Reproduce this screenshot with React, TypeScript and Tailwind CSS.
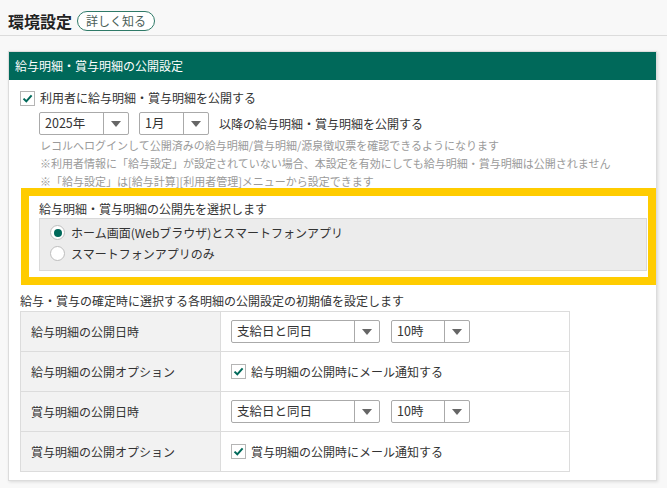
const GREEN = '#00695a';

function CheckBox() {
  return (
    <span className="flex h-[15px] w-[15px] shrink-0 items-center justify-center border border-[#b5b5b5] bg-white">
      <svg width="11" height="11" viewBox="0 0 11 11">
        <path d="M1.5 5.6 L4.3 8.3 L9.6 2.4" fill="none" stroke={GREEN} strokeWidth="2" />
      </svg>
    </span>
  );
}

function Radio({ checked }: { checked?: boolean }) {
  return (
    <span className="flex h-[15px] w-[15px] shrink-0 items-center justify-center rounded-full border border-[#bdbdbd] bg-white">
      {checked && <span className="h-[8px] w-[8px] rounded-full bg-[#00695a]" />}
    </span>
  );
}

function Select({ value, width }: { value: string; width: string }) {
  return (
    <div className={`flex h-[23px] ${width} items-stretch rounded-[2px] border border-[#aaa] bg-white`}>
      <div className="flex flex-1 items-center pl-[5px] text-[12.5px] text-[#333]">{value}</div>
      <div className="flex w-[25px] items-center justify-center border-l border-[#aaa]">
        <svg width="10" height="6" viewBox="0 0 10 6">
          <path d="M0 0 H10 L5 6 Z" fill="#666" />
        </svg>
      </div>
    </div>
  );
}

const rows = [
  { label: '給与明細の公開日時', kind: 'select' },
  { label: '給与明細の公開オプション', kind: 'check', text: '給与明細の公開時にメール通知する' },
  { label: '賞与明細の公開日時', kind: 'select' },
  { label: '賞与明細の公開オプション', kind: 'check', text: '賞与明細の公開時にメール通知する' },
];

export default function App() {
  return (
    <div className="min-h-[488px] w-[667px] bg-[#f8f8f8] font-['Noto_Sans_CJK_JP',sans-serif] text-[12px] text-[#333]">
      <div className="flex h-[36px] items-center gap-[5px] border-b border-[#dcdcdc] pl-[8px] pt-[6px]">
        <h1 className="text-[16px] font-bold leading-none text-[#222]">環境設定</h1>
        <span className="flex h-[20px] w-[78px] items-center justify-center rounded-full border-[1.5px] border-[#2f7a68] bg-white text-[12px] leading-none text-[#4a5d57]">
          詳しく知る
        </span>
      </div>

      <div className="ml-[8px] mt-[15px] w-[649px] border border-[#dcdcdc] bg-white shadow-[1px_1px_3px_rgba(0,0,0,0.12)]">
        <div className="flex h-[28px] items-center bg-[#00695a] pl-[6px] text-[12px] text-white">
          給与明細・賞与明細の公開設定
        </div>

        <div className="pb-[8px] pl-[11px] pt-[9px]">
          <label className="flex h-[18px] items-center gap-[5px]">
            <CheckBox />
            <span className="leading-[18px]">利用者に給与明細・賞与明細を公開する</span>
          </label>

          <div className="ml-[19px] mt-[5px] flex items-center gap-[10px]">
            <Select value="2025年" width="w-[90px]" />
            <Select value="1月" width="w-[70px]" />
            <span className="leading-[18px]">以降の給与明細・賞与明細を公開する</span>
          </div>

          <div className="ml-[20px] mt-px text-[11px] leading-[18px] text-[#9a9a9a]">
            <p>レコルへログインして公開済みの給与明細/賞与明細/源泉徴収票を確認できるようになります</p>
            <p>※利用者情報に「給与設定」が設定されていない場合、本設定を有効にしても給与明細・賞与明細は公開されません</p>
            <p>※「給与設定」は[給与計算][利用者管理]メニューから設定できます</p>
          </div>

          <div className="-mt-[2px] ml-px border-[8px] border-[#ffcc00] bg-white pb-[6px] pl-[10px] pr-px pt-[4px]">
            <p className="leading-[18px]">給与明細・賞与明細の公開先を選択します</p>
            <div className="border border-[#d9d9d9] bg-[#ececec] pb-[6px] pl-[10px] pt-[3px]">
              <label className="flex h-[21px] items-center gap-[6px]">
                <Radio checked />
                <span>ホーム画面(Webブラウザ)とスマートフォンアプリ</span>
              </label>
              <label className="flex h-[21px] items-center gap-[6px]">
                <Radio />
                <span>スマートフォンアプリのみ</span>
              </label>
            </div>
          </div>

          <p className="mt-[7px] leading-[18px]">給与・賞与の確定時に選択する各明細の公開設定の初期値を設定します</p>

          <table className="mt-px w-[550px] border-collapse">
            <tbody>
              {rows.map((r) => (
                <tr key={r.label} className="h-[40px]">
                  <td className="w-[200px] border border-[#dcdcdc] bg-[#f2f2f2] pl-[10px] align-middle">{r.label}</td>
                  <td className="border border-[#dcdcdc] pl-[10px] align-middle">
                    {r.kind === 'select' ? (
                      <div className="flex items-center gap-[11px]">
                        <Select value="支給日と同日" width="w-[149px]" />
                        <Select value="10時" width="w-[79px]" />
                      </div>
                    ) : (
                      <label className="flex items-center gap-[5px]">
                        <CheckBox />
                        <span>{r.text}</span>
                      </label>
                    )}
                  </td>
                </tr>
              ))}
            </tbody>
          </table>
        </div>
      </div>
    </div>
  );
}
